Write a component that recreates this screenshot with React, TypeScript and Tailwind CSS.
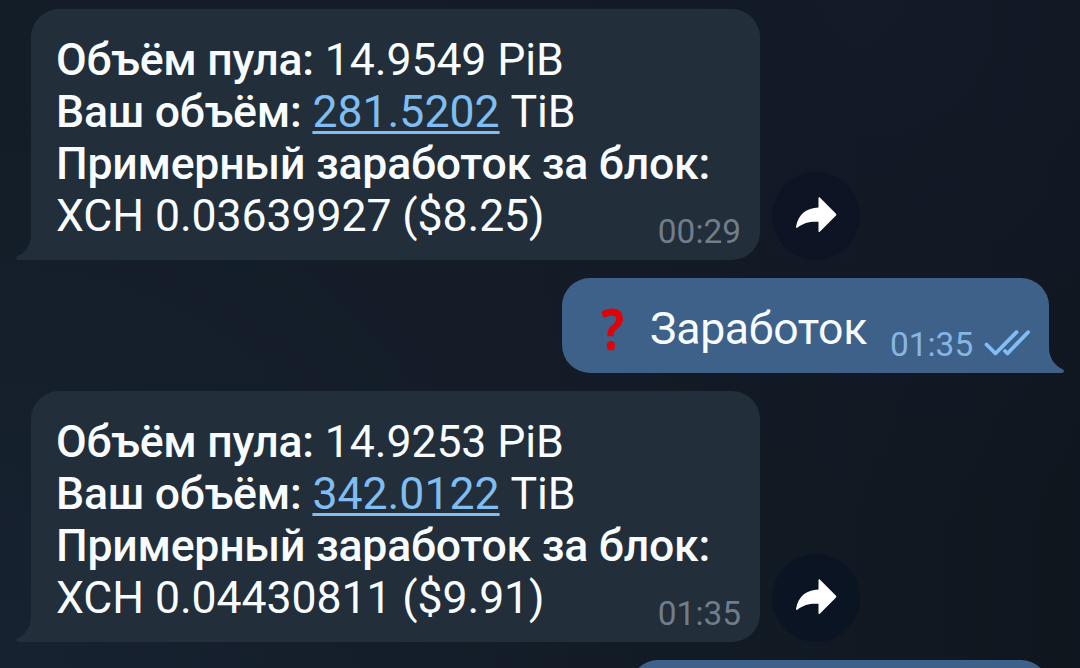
import { ReactNode } from "react";

type PoolStats = {
  pool: string;
  own: string;
  reward: string;
  time: string;
};

const firstStats: PoolStats = {
  pool: "14.9549 PiB",
  own: "281.5202",
  reward: "XCH 0.03639927 ($8.25)",
  time: "00:29",
};

const secondStats: PoolStats = {
  pool: "14.9253 PiB",
  own: "342.0122",
  reward: "XCH 0.04430811 ($9.91)",
  time: "01:35",
};

function Tail({ className }: { className: string }) {
  return (
    <svg className={className} width="16" height="28" viewBox="0 0 16 28">
      <path d="M16 0H15V3C15 13 9 21 1 24.5C-0.5 25.3 0 28 2 28H16Z" fill="currentColor" />
    </svg>
  );
}

function ForwardButton() {
  return (
    <button className="flex size-[88px] items-center justify-center rounded-full bg-[#061022]/50">
      <svg width="42" height="38" viewBox="0 0 42 38" fill="white">
        <path d="M23.500 1C23.500 0.200 24.200 0 24.800 0.500L41 16.700Q41.800 17.600 41 18.500L24.800 34.700C24.200 35.300 23.500 35 23.500 34.300V24.800C15 24.300 8.500 25.800 2.700 30.500C1.700 31.300 0.900 30.800 1.100 29.600C3.200 17.600 11.500 10.900 23.500 10.600Z" />
      </svg>
    </button>
  );
}

function DoubleCheck() {
  return (
    <svg
      width="46"
      height="28"
      viewBox="0 0 46 28"
      fill="none"
      stroke="#82bdf5"
      strokeWidth="3.800"
      strokeLinecap="round"
      strokeLinejoin="round"
    >
      <path d="M2.500 15.500L11.500 24.500L32.500 3.200" />
      <path d="M21 22L23.500 24.500L44 3.200" />
    </svg>
  );
}

function Line({ children }: { children: ReactNode }) {
  return <p className="h-[52px] leading-[52px] whitespace-nowrap">{children}</p>;
}

function Label({ children }: { children: ReactNode }) {
  return <b className="font-medium tracking-[-0.250px]">{children}</b>;
}

function StatsMessage({ stats }: { stats: PoolStats }) {
  return (
    <div className="flex items-end gap-3 pl-[31px]">
      <div className="relative flex h-[251px] w-[729px] justify-between rounded-[28px] rounded-bl-none bg-[#222e39] pt-[25px] pr-[19px] pl-[25px]">
        <Tail className="absolute bottom-0 -left-[15px] text-[#222e39]" />
        <div className="w-0 text-[44.6px] tracking-[-0.090px] text-[#f8fcff]">
          <Line>
            <Label>Объём пула:</Label> {stats.pool}
          </Line>
          <Line>
            <Label>Ваш объём:</Label>{" "}
            <a className="tracking-normal text-[#7fbdf3] underline decoration-[2.500px] underline-offset-[4px]">
              {stats.own}
            </a>{" "}
            TiB
          </Line>
          <Line>
            <Label>Примерный заработок за блок:</Label>
          </Line>
          <Line>{stats.reward}</Line>
        </div>
        <span className="self-end pb-2 text-[33.4px] leading-10 text-[#707d8a]">{stats.time}</span>
      </div>
      <ForwardButton />
    </div>
  );
}

function RequestMessage() {
  return (
    <div className="flex justify-end pr-[31px]">
      <div className="relative flex h-[95px] w-[487px] rounded-[28px] rounded-br-none bg-[#3e6189] pl-[37px]">
        <Tail className="absolute -right-[15px] bottom-0 -scale-x-100 text-[#3e6189]" />
        <span className="w-[51px] pt-[18px] font-['Open_Sans'] text-[57px] leading-[64px] font-bold text-[#df0209]">
          <span className="inline-block origin-left translate-x-[2px] scale-x-85">?</span>
        </span>
        <span className="w-[240px] pt-[25px] text-[44.6px] leading-[52px] tracking-[-0.300px] text-[#f8fcff]">
          Заработок
        </span>
        <span className="w-[94px] self-end pb-2 text-[33.4px] leading-10 text-[#86b6e4]">01:35</span>
        <span className="self-end pb-4">
          <DoubleCheck />
        </span>
      </div>
    </div>
  );
}

export default function App() {
  return (
    <main className="flex h-[668px] w-[1080px] flex-col gap-[18px] overflow-hidden bg-[radial-gradient(circle_at_0%_100%,#172231_0%,transparent_45%),radial-gradient(circle_at_80%_0%,#131a28_0%,transparent_50%),linear-gradient(to_right,#131d27,#131c27_50%,#10161e)] pt-[9px] font-[Roboto,sans-serif]">
      <StatsMessage stats={firstStats} />
      <RequestMessage />
      <StatsMessage stats={secondStats} />
      <div className="flex justify-end pr-[31px]">
        <div className="h-[95px] w-[419px] rounded-[28px] bg-[#3e6189]" />
      </div>
    </main>
  );
}
